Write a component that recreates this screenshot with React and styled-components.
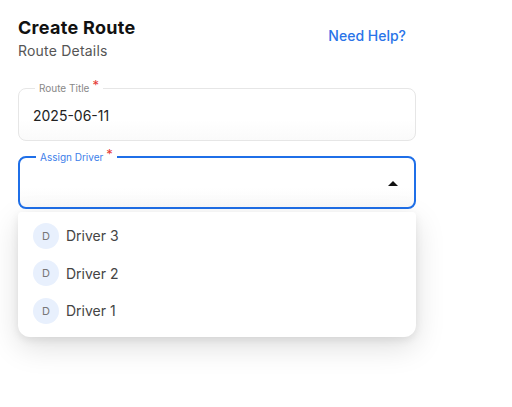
import React from 'react';
import styled, { createGlobalStyle } from 'styled-components';

const Global = createGlobalStyle`
  body {
    margin: 0;
    background: #fff;
    font-family: Inter, "Noto Sans", sans-serif;
  }
`;

const Page = styled.div`
  width: 434px;
  min-height: 407px;
  box-sizing: border-box;
  padding: 16px 18px 60px;
`;

const Header = styled.header`
  display: flex;
  justify-content: space-between;
  align-items: center;
  margin-bottom: 21px;
`;

const Title = styled.h1`
  margin: 0;
  font-size: 18px;
  line-height: 24px;
  font-weight: 700;
  letter-spacing: 0.3px;
  color: #111;
`;

const Subtitle = styled.p`
  margin: 0;
  font-size: 14px;
  line-height: 22px;
  letter-spacing: 0.2px;
  color: #555;
`;

const HelpLink = styled.a`
  margin: 0 10px 8px 0;
  font-size: 14px;
  font-weight: 500;
  color: #2a74e8;
  text-decoration: none;
  cursor: pointer;
`;

const Field = styled.fieldset`
  margin: 0 0 ${p => p.$gap || 0}px;
  padding: 0 14px;
  height: ${p => p.$focused ? 53 : 56}px;
  border: ${p => p.$focused ? '2px solid #1f6fe8' : '1px solid #e6e6e6'};
  border-radius: 8px;
  display: flex;
  align-items: center;
  justify-content: space-between;
  box-sizing: content-box;
  background: linear-gradient(to bottom, #fff 60%, #fafafa);
`;

const Legend = styled.legend`
  padding: 0 4px;
  margin-left: 2px;
  font-size: 10px;
  line-height: 10px;
  color: ${p => p.$focused ? '#3d80ea' : '#888'};
`;

const Star = styled.span`
  color: #e53935;
  font-size: 13px;
  line-height: 0;
  margin-left: 3px;
  position: relative;
  top: -2px;
`;

const Value = styled.span`
  font-size: 14px;
  color: #222;
  margin-top: -2px;
`;

const Arrow = styled.span`
  width: 0;
  height: 0;
  margin: -2px 2px 0 auto;
  border-left: 5px solid transparent;
  border-right: 5px solid transparent;
  border-bottom: 5px solid #111;
`;

const Menu = styled.ul`
  list-style: none;
  margin: 3px 0 0;
  padding: 5px 0 7px;
  background: #fff;
  border-radius: 4px 4px 12px 12px;
  box-shadow: 0 10px 30px rgba(0, 0, 0, 0.13), 0 3px 8px rgba(0, 0, 0, 0.08);
`;

const Option = styled.li`
  display: flex;
  align-items: center;
  gap: 7px;
  height: 37.5px;
  padding: 0 15px;
  font-size: 14px;
  color: #444;
`;

const Avatar = styled.span`
  width: 26px;
  height: 26px;
  border-radius: 50%;
  background: #e8f0fd;
  color: #777;
  font-size: 11px;
  display: flex;
  align-items: center;
  justify-content: center;
`;

const drivers = ['Driver 3', 'Driver 2', 'Driver 1'];

export default function App() {
  return (
    <Page>
      <Global />
      <Header>
        <div>
          <Title>Create Route</Title>
          <Subtitle>Route Details</Subtitle>
        </div>
        <HelpLink>Need Help?</HelpLink>
      </Header>

      <Field $gap={11}>
        <Legend>Route Title<Star>*</Star></Legend>
        <Value>2025-06-11</Value>
      </Field>

      <Field $focused>
        <Legend $focused>Assign Driver<Star>*</Star></Legend>
        <Arrow />
      </Field>

      <Menu>
        {drivers.map(d => (
          <Option key={d}>
            <Avatar>D</Avatar>
            {d}
          </Option>
        ))}
      </Menu>
    </Page>
  );
}
